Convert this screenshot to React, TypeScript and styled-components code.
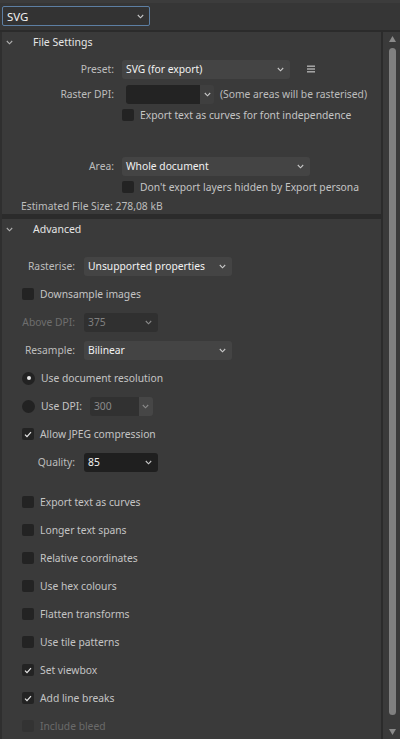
import React from "react";
import styled, { createGlobalStyle, css } from "styled-components";

const GlobalStyle = createGlobalStyle`
  html, body { margin: 0; padding: 0; background: #3a3a3a; }
  body { font-family: "Noto Sans", "Open Sans", sans-serif; font-size: 10.3px; color: #c8c8c8; }
  * { box-sizing: border-box; }
`;

const Root = styled.div`
  width: 400px;
  height: 739px;
  display: flex;
  flex-direction: column;
  overflow: hidden;
  background: #3a3a3a;
`;

const TopBar = styled.div`
  height: 30px;
  flex: none;
  background: #363636;
  border-top: 3px solid #3c3c3c;
  padding: 3px 0 0 2px;
`;

const TopSelect = styled.div`
  width: 148px;
  height: 20px;
  border: 1px solid #5d7fa3;
  border-radius: 2px;
  background: #333333;
  display: flex;
  align-items: center;
  justify-content: space-between;
  padding: 0 5px 0 4px;
  color: #f0f0f0;
  font-size: 11.5px;
`;

const Main = styled.div`
  flex: 1;
  display: flex;
  min-height: 0;
  border-top: 2px solid #2b2b2b;
`;

const Content = styled.div`
  flex: 1;
  display: flex;
  flex-direction: column;
  border-left: 2px solid #2f2f2f;
  border-right: 2px solid #2b2b2b;
  overflow: hidden;
`;

const Section = styled.div<{ $end?: boolean }>`
  display: flex;
  flex-direction: column;
  ${(p) => p.$end && css`border-bottom: 5px solid #2b2b2b;`}
`;

const Header = styled.div`
  height: 20px;
  display: flex;
  align-items: center;
  color: #e6e6e6;
  font-size: 10.5px;
  padding-left: 4px;
  gap: 20px;
`;

const Chevron = ({ color = "#b0b0b0", w = 7 }: { color?: string; w?: number }) => (
  <svg width={w} height={5} viewBox="0 0 7 5">
    <path d="M0.8 1 L3.5 3.8 L6.2 1" fill="none" stroke={color} strokeWidth="1.1" />
  </svg>
);

const FileBody = styled.div`
  display: flex;
  flex-direction: column;
  padding-top: 7px;
  padding-bottom: 0;
`;

const FormRow = styled.div<{ $label: number; $gap: number; $h?: number; $mt?: number }>`
  display: flex;
  align-items: center;
  height: ${(p) => p.$h ?? 20}px;
  margin-top: ${(p) => p.$mt ?? 0}px;
  gap: ${(p) => p.$gap}px;
  & > .lbl { width: ${(p) => p.$label}px; }
`;

const Label = styled.span<{ $disabled?: boolean }>`
  flex: none;
  text-align: right;
  color: ${(p) => (p.$disabled ? "#6e6e6e" : "#bdbdbd")};
  white-space: nowrap;
`;

const Select = styled.div<{ $w: number; $tone?: "normal" | "dark" | "disabled" }>`
  width: ${(p) => p.$w}px;
  height: 19px;
  border-radius: 3px;
  display: flex;
  align-items: center;
  justify-content: space-between;
  padding: 0 6px 0 4px;
  white-space: nowrap;
  background: ${(p) => (p.$tone === "dark" ? "#1f1f1f" : p.$tone === "disabled" ? "#303030" : "#444444")};
  color: ${(p) => (p.$tone === "disabled" ? "#808080" : "#f2f2f2")};
`;

const Combo = styled.div`
  display: flex;
  height: 19px;
  border-radius: 3px;
  overflow: hidden;
`;

const ComboInput = styled.div<{ $w: number; $dim?: boolean }>`
  width: ${(p) => p.$w}px;
  background: ${(p) => (p.$dim ? "#313131" : "#232323")};
  color: #8a8a8a;
  display: flex;
  align-items: center;
  padding-left: 4px;
`;

const ComboButton = styled.div<{ $dim?: boolean }>`
  width: 14px;
  background: ${(p) => (p.$dim ? "#464646" : "#3f3f3f")};
  display: flex;
  align-items: center;
  justify-content: center;
`;

const Hint = styled.span`
  color: #bdbdbd;
  white-space: nowrap;
`;

const CheckRow = styled.div<{ $indent: number; $h?: number; $mt?: number; $disabled?: boolean }>`
  display: flex;
  align-items: center;
  gap: 6px;
  height: ${(p) => p.$h ?? 20}px;
  margin-top: ${(p) => p.$mt ?? 0}px;
  padding-left: ${(p) => p.$indent}px;
  color: ${(p) => (p.$disabled ? "#6a6a6a" : "#c4c4c4")};
  white-space: nowrap;
`;

const Box = styled.span<{ $disabled?: boolean }>`
  width: 12px;
  height: 12px;
  flex: none;
  border-radius: 2px;
  background: ${(p) => (p.$disabled ? "#333333" : "#232323")};
  display: flex;
  align-items: center;
  justify-content: center;
`;

const Radio = styled.span`
  width: 13px;
  height: 13px;
  flex: none;
  border-radius: 50%;
  background: #222222;
  display: flex;
  align-items: center;
  justify-content: center;
`;

const Dot = styled.span`
  width: 4px;
  height: 4px;
  border-radius: 50%;
  background: #e8e8e8;
`;

const Info = styled.div`
  height: 17px;
  display: flex;
  align-items: center;
  padding-left: 19px;
  color: #bdbdbd;
`;

const AdvBody = styled.div`
  display: flex;
  flex-direction: column;
  padding-top: 13px;
`;

const Scrollbar = styled.div`
  width: 17px;
  flex: none;
  background: #3a3a3a;
  display: flex;
  flex-direction: column;
  align-items: center;
  padding: 4px 0 4px 1px;
`;

const Thumb = styled.div`
  flex: 1;
  width: 7px;
  margin: 6px 0 14px;
  border-radius: 4px;
  background: #808080;
`;

const Tri = ({ up }: { up?: boolean }) => (
  <svg width="7" height="6" viewBox="0 0 7 6">
    <path d={up ? "M3.5 0 L7 6 L0 6 Z" : "M0 0 L7 0 L3.5 6 Z"} fill="#8a8a8a" />
  </svg>
);

const Check = () => (
  <svg width="8" height="7" viewBox="0 0 8 7">
    <path d="M1 3.6 L3 5.6 L7 1.2" fill="none" stroke="#e8e8e8" strokeWidth="1.2" />
  </svg>
);

const Burger = () => (
  <svg width="8" height="8" viewBox="0 0 8 8" style={{ marginLeft: 9 }}>
    <rect x="0" y="0.5" width="8" height="1.4" fill="#b0b0b0" />
    <rect x="0" y="3.3" width="8" height="1.4" fill="#b0b0b0" />
    <rect x="0" y="6.1" width="8" height="1.4" fill="#b0b0b0" />
  </svg>
);

type Opt = { label: string; checked?: boolean; disabled?: boolean };
const options: Opt[] = [
  { label: "Export text as curves" },
  { label: "Longer text spans" },
  { label: "Relative coordinates" },
  { label: "Use hex colours" },
  { label: "Flatten transforms" },
  { label: "Use tile patterns" },
  { label: "Set viewbox", checked: true },
  { label: "Add line breaks", checked: true },
  { label: "Include bleed", disabled: true },
];

export default function App() {
  return (
    <Root>
      <GlobalStyle />
      <TopBar>
        <TopSelect>
          <span>SVG</span>
          <Chevron color="#c8c8c8" />
        </TopSelect>
      </TopBar>
      <Main>
        <Content>
          <Section $end>
            <Header>
              <Chevron />
              <span>File Settings</span>
            </Header>
            <FileBody>
              <FormRow $label={112} $gap={8}>
                <Label className="lbl">Preset:</Label>
                <Select $w={168}>
                  <span>SVG (for export)</span>
                  <Chevron color="#c8c8c8" />
                </Select>
                <Burger />
              </FormRow>
              <FormRow $label={112} $gap={12} $mt={5}>
                <Label className="lbl">Raster DPI:</Label>
                <Combo>
                  <ComboInput $w={74} />
                  <ComboButton>
                    <Chevron color="#c8c8c8" />
                  </ComboButton>
                </Combo>
                <Hint style={{ marginLeft: -6 }}>(Some areas will be rasterised)</Hint>
              </FormRow>
              <CheckRow $indent={120} $mt={1}>
                <Box />
                <span>Export text as curves for font independence</span>
              </CheckRow>
              <FormRow $label={112} $gap={8} $mt={31}>
                <Label className="lbl">Area:</Label>
                <Select $w={188}>
                  <span>Whole document</span>
                  <Chevron color="#c8c8c8" />
                </Select>
              </FormRow>
              <CheckRow $indent={120} $mt={1}>
                <Box />
                <span>Don't export layers hidden by Export persona</span>
              </CheckRow>
              <Info>Estimated File Size: 278,08 kB</Info>
            </FileBody>
          </Section>
          <Section>
            <Header>
              <Chevron />
              <span>Advanced</span>
            </Header>
            <AdvBody>
              <FormRow $label={73} $gap={9} $h={28}>
                <Label className="lbl">Rasterise:</Label>
                <Select $w={148}>
                  <span>Unsupported properties</span>
                  <Chevron color="#c8c8c8" />
                </Select>
              </FormRow>
              <CheckRow $indent={20} $h={28}>
                <Box />
                <span>Downsample images</span>
              </CheckRow>
              <FormRow $label={73} $gap={9} $h={28}>
                <Label className="lbl" $disabled>Above DPI:</Label>
                <Select $w={74} $tone="disabled">
                  <span>375</span>
                  <Chevron color="#8a8a8a" />
                </Select>
              </FormRow>
              <FormRow $label={73} $gap={9} $h={28}>
                <Label className="lbl">Resample:</Label>
                <Select $w={148}>
                  <span>Bilinear</span>
                  <Chevron color="#c8c8c8" />
                </Select>
              </FormRow>
              <CheckRow $indent={20} $h={28}>
                <Radio>
                  <Dot />
                </Radio>
                <span>Use document resolution</span>
              </CheckRow>
              <CheckRow $indent={20} $h={28}>
                <Radio />
                <span>Use DPI:</span>
                <Combo style={{ marginLeft: 2 }}>
                  <ComboInput $w={49} $dim>300</ComboInput>
                  <ComboButton $dim>
                    <Chevron color="#8a8a8a" />
                  </ComboButton>
                </Combo>
              </CheckRow>
              <CheckRow $indent={20} $h={28}>
                <Box>
                  <Check />
                </Box>
                <span>Allow JPEG compression</span>
              </CheckRow>
              <FormRow $label={73} $gap={9} $h={28}>
                <Label className="lbl">Quality:</Label>
                <Select $w={74} $tone="dark">
                  <span>85</span>
                  <Chevron color="#c8c8c8" />
                </Select>
              </FormRow>
              {options.map((o, i) => (
                <CheckRow key={o.label} $indent={20} $h={28} $mt={i === 0 ? 12 : 0} $disabled={o.disabled}>
                  <Box $disabled={o.disabled}>{o.checked && <Check />}</Box>
                  <span>{o.label}</span>
                </CheckRow>
              ))}
            </AdvBody>
          </Section>
        </Content>
        <Scrollbar>
          <Tri up />
          <Thumb />
          <Tri />
        </Scrollbar>
      </Main>
    </Root>
  );
}
